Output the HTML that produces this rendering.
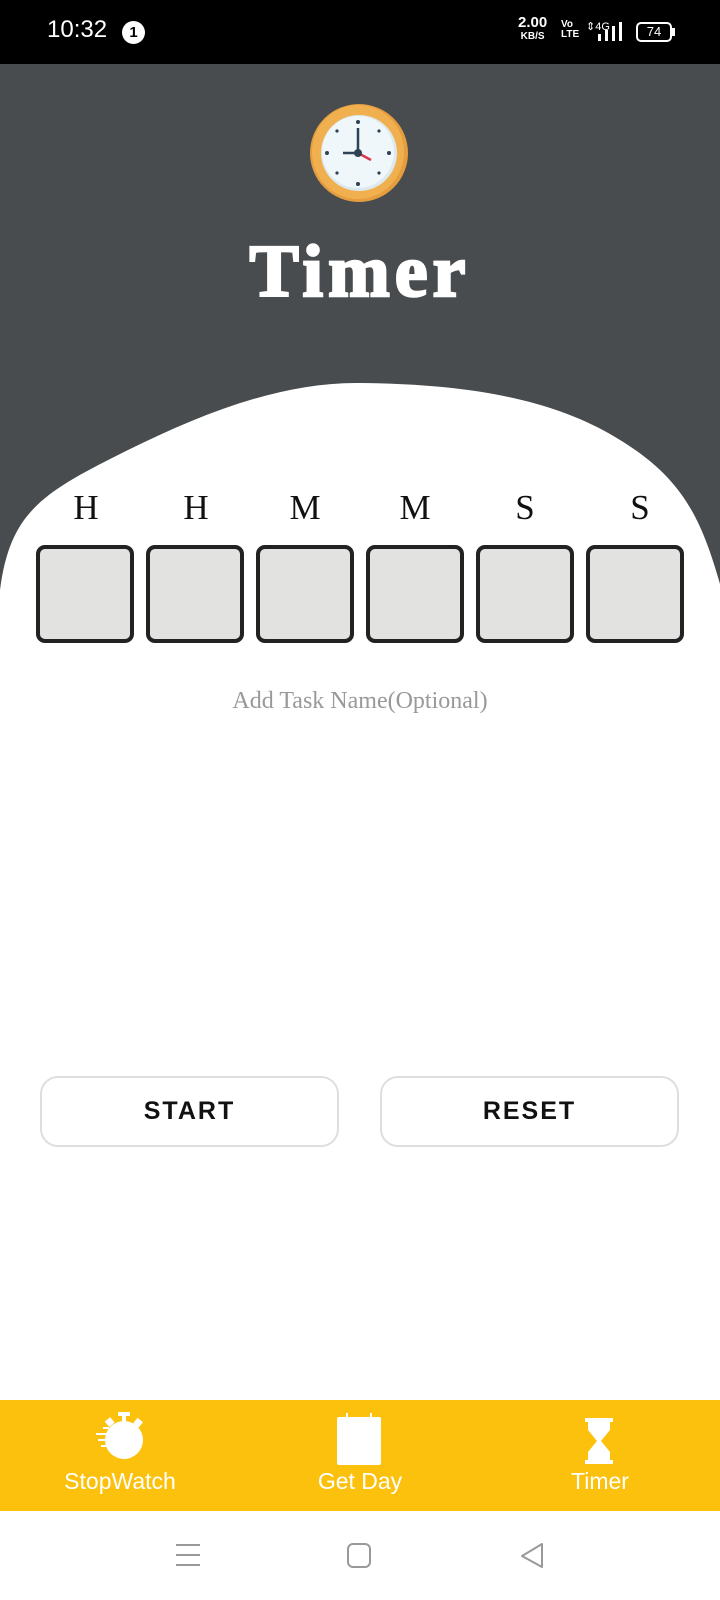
<!DOCTYPE html>
<html><head><meta charset="utf-8"><style>
*{margin:0;padding:0;box-sizing:border-box}
body{width:720px;height:1600px;position:relative;background:#fff;font-family:"Liberation Sans",sans-serif;overflow:hidden}
.abs{position:absolute}
.box{position:absolute;top:545px;width:98px;height:98px;border:4px solid #222;border-radius:9px;background:#e2e2e1}
.lt{position:absolute;top:488px;width:98px;text-align:center;font-family:"Liberation Serif",serif;font-size:35px;color:#111}
.btn{position:absolute;top:1076px;height:71px;width:299px;border:2px solid #dedede;border-radius:18px;text-align:center;line-height:67px;font-size:25px;font-weight:bold;letter-spacing:2px;color:#111}
.nl{position:absolute;top:1468px;font-size:23px;color:#fff;text-align:center;width:200px}
</style></head><body>
<div class="abs" style="left:0;top:0;width:720px;height:64px;background:#000"></div>
<div class="abs" style="left:47px;top:16px;color:#fff;font-size:24px">10:32</div>
<div class="abs" style="left:122px;top:21px;width:23px;height:23px;border-radius:50%;background:#fff;color:#000;font-size:15px;font-weight:bold;text-align:center;line-height:23px">1</div>
<div class="abs" style="left:518px;top:17px;color:#fff;font-size:15px;font-weight:bold;line-height:12px;text-align:center">2.00<br><span style="font-size:10px">KB/S</span></div>
<div class="abs" style="left:561px;top:20px;color:#fff;font-size:10px;font-weight:bold;line-height:10px">Vo<br>LTE</div>
<div class="abs" style="left:586px;top:20px;color:#fff;font-size:11px">⇕4G</div>
<div class="abs" style="left:598px;top:34px;width:3px;height:7px;background:#fff"></div>
<div class="abs" style="left:605px;top:30px;width:3px;height:11px;background:#fff"></div>
<div class="abs" style="left:612px;top:26px;width:3px;height:15px;background:#fff"></div>
<div class="abs" style="left:619px;top:22px;width:3px;height:19px;background:#fff"></div>
<div class="abs" style="left:636px;top:22px;width:36px;height:20px;border:2px solid #fff;border-radius:5px;color:#fff;font-size:13px;text-align:center;line-height:16px">74</div>
<div class="abs" style="left:672px;top:28px;width:3px;height:8px;background:#fff"></div>
<svg class="abs" style="left:0;top:64px" width="720" height="600">
<rect width="720" height="600" fill="#484c4e"/>
<path d="M0 526 C10 450 40 430 120 390 C200 350 280 318 360 319 C450 320 540 330 610 370 C680 410 700 450 720 520 L720 600 L0 600Z" fill="#fff"/>
</svg>
<svg class="abs" style="left:309px;top:103px" width="100" height="100" viewBox="0 0 100 100">
<ellipse cx="50" cy="50" rx="49" ry="49" fill="#e59d3e"/>
<ellipse cx="49" cy="49" rx="46" ry="47" fill="#f1b050"/>
<circle cx="50" cy="50" r="38" fill="#dce9ee"/>
<circle cx="49" cy="49" r="36" fill="#f0f7fa"/>
<g fill="#2d4354">
<circle cx="49" cy="19" r="2"/><circle cx="49" cy="81" r="2"/><circle cx="18" cy="50" r="2"/><circle cx="80" cy="50" r="2"/>
<circle cx="28" cy="28" r="1.6"/><circle cx="70" cy="28" r="1.6"/><circle cx="28" cy="70" r="1.6"/><circle cx="70" cy="70" r="1.6"/>
</g>
<line x1="49" y1="25" x2="49" y2="50" stroke="#2d4354" stroke-width="2.5"/>
<line x1="34" y1="50" x2="49" y2="50" stroke="#2d4354" stroke-width="2.5"/>
<line x1="49" y1="50" x2="62" y2="57" stroke="#d8394a" stroke-width="2.5"/>
<circle cx="49" cy="50" r="4" fill="#2d4354"/>
</svg>
<div class="abs" style="left:0;top:230px;width:720px;text-align:center;color:#fff;font-family:'Liberation Serif',serif;font-weight:900;font-size:74px;letter-spacing:5px;-webkit-text-stroke:2.5px #fff">Timer</div>
<div class="lt" style="left:37px">H</div><div class="lt" style="left:147px">H</div><div class="lt" style="left:256px">M</div><div class="lt" style="left:366px">M</div><div class="lt" style="left:476px">S</div><div class="lt" style="left:591px">S</div>
<div class="box" style="left:36px"></div><div class="box" style="left:146px"></div><div class="box" style="left:256px"></div><div class="box" style="left:366px"></div><div class="box" style="left:476px"></div><div class="box" style="left:586px"></div>
<div class="abs" style="left:0;top:688px;width:720px;text-align:center;font-family:'Liberation Serif',serif;font-size:24px;color:#999">Add Task Name(Optional)</div>
<div class="btn" style="left:40px">START</div>
<div class="btn" style="left:380px">RESET</div>
<div class="abs" style="left:0;top:1400px;width:720px;height:111px;background:#fcc10c"></div>
<svg class="abs" style="left:94px;top:1411px" width="56" height="50" viewBox="0 0 56 50">
<rect x="24" y="1" width="12" height="4" fill="#fff"/><rect x="28" y="4" width="4" height="6" fill="#fff"/>
<circle cx="30" cy="29" r="19" fill="#fff"/>
<rect x="12" y="8" width="7" height="7" fill="#fff" transform="rotate(-40 15 11)"/><rect x="41" y="8" width="7" height="7" fill="#fff" transform="rotate(40 44 11)"/>
<rect x="2" y="22" width="12" height="2" fill="#fff"/><rect x="4" y="28" width="10" height="2" fill="#fff"/><rect x="7" y="34" width="8" height="2" fill="#fff"/><rect x="9" y="16" width="6" height="2" fill="#fff"/>
</svg>
<svg class="abs" style="left:336px;top:1413px" width="48" height="56"><rect x="1" y="4" width="44" height="48" rx="2" fill="#fff"/><rect x="10" y="0" width="2" height="6" fill="#fff"/><rect x="34" y="0" width="2" height="6" fill="#fff"/></svg>
<svg class="abs" style="left:584px;top:1418px" width="30" height="50" viewBox="0 0 30 50"><rect x="1" y="0" width="28" height="4" fill="#fff"/><rect x="1" y="42" width="28" height="4" fill="#fff"/><path d="M4 4 H26 V12 L17 23 L26 34 V42 H4 V34 L13 23 L4 12Z" fill="#fff"/></svg>
<div class="nl" style="left:20px">StopWatch</div>
<div class="nl" style="left:260px">Get Day</div>
<div class="nl" style="left:500px">Timer</div>
<svg class="abs" style="left:172px;top:1540px" width="30" height="30"><g stroke="#999" stroke-width="2"><line x1="4" y1="5" x2="28" y2="5"/><line x1="4" y1="15" x2="28" y2="15"/><line x1="4" y1="25" x2="28" y2="25"/></g></svg>
<svg class="abs" style="left:344px;top:1540px" width="30" height="30"><rect x="4" y="4" width="22" height="23" rx="5" fill="none" stroke="#999" stroke-width="2"/></svg>
<svg class="abs" style="left:516px;top:1540px" width="30" height="30"><path d="M26 4 L26 27 L6 16Z" fill="none" stroke="#999" stroke-width="2" stroke-linejoin="round"/></svg>
</body></html>
